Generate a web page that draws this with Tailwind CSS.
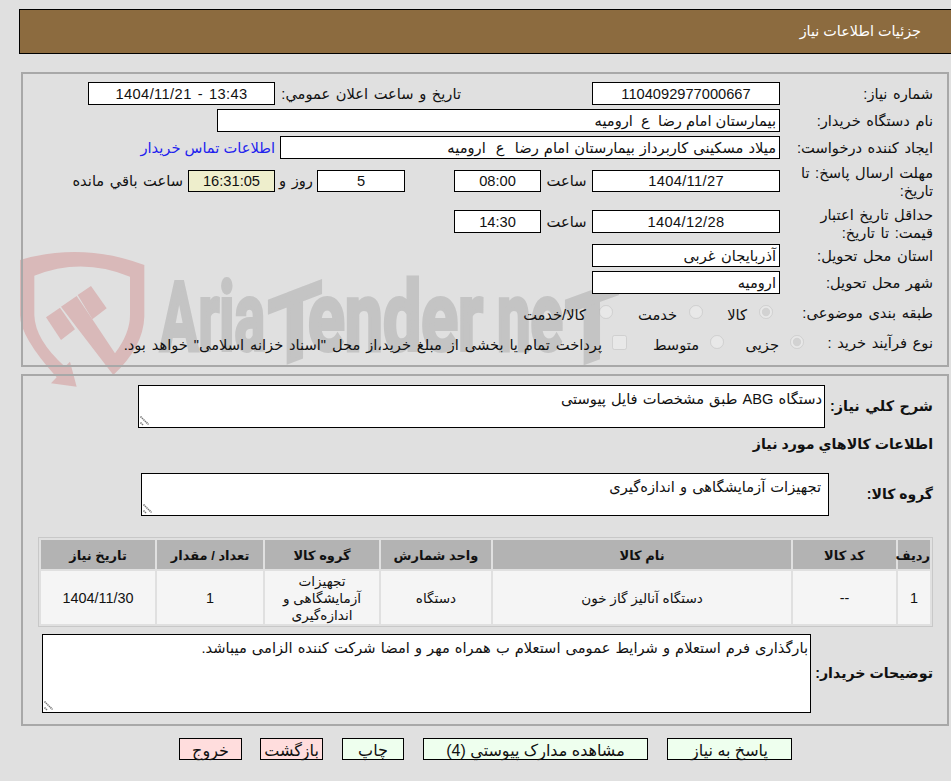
<!DOCTYPE html>
<html dir="rtl" lang="fa">
<head>
<meta charset="utf-8">
<script src="https://cdn.jsdelivr.net/npm/@tailwindcss/browser@4"></script>
<title>جزئیات اطلاعات نیاز</title>
</head>
<body class="relative h-[781px] w-[951px] overflow-hidden bg-[#e0e0e0] font-['Liberation_Sans','DejaVu_Sans',sans-serif] text-[14.67px] text-[#111] [word-spacing:1.5px]">
<svg class="absolute left-0 top-0 h-[781px] w-[951px]" viewBox="0 0 951 781" aria-hidden="true">
  <g transform="translate(15 240) scale(.33333)" fill="#d9b9b9">
    <path d="M15,60 Q200,5 388,75 L388,230 Q385,320 295,405 L185,262 L138,200 L185,168 L232,238 L300,340 Q345,280 345,225 L345,110 Q200,50 58,107 L58,225 Q60,300 150,380 L165,365 L185,440 L108,430 L125,412 Q15,290 15,225 Z"/>
    <path d="M93,232 L135,203 L180,268 L138,300 Z"/>
    <path d="M188,165 L228,138 L275,205 L232,238 Z"/>
  </g>
  <g fill="#c4c4c4" stroke="#c4c4c4" stroke-width="4" font-family="Roboto" font-weight="700" font-size="96">
    <text x="160" y="350" direction="ltr" textLength="105" lengthAdjust="spacingAndGlyphs">Aria</text>
    <text x="308" y="350" direction="ltr" textLength="175" lengthAdjust="spacingAndGlyphs">ender</text>
    <text x="497" y="350" direction="ltr" textLength="66" lengthAdjust="spacingAndGlyphs">ne</text>
    <text transform="translate(268 350) skewY(-21)" direction="ltr" textLength="54" lengthAdjust="spacingAndGlyphs" y="20">T</text>
    <text transform="translate(565 350) skewY(-20)" direction="ltr" textLength="54" lengthAdjust="spacingAndGlyphs" y="20">T</text>
  </g>
</svg>

<div class="relative">
  <div class="pt-[9px]">
    <div class="ml-[19px] mr-[-2px] flex h-[45px] items-center border border-black bg-[#8c6b3f] pr-[31px] pt-[1px] text-[14.4px] text-white [word-spacing:0]">جزئیات اطلاعات نیاز</div>
  </div>

  <section class="ml-[21px] mr-[2px] mt-[18px] h-[295px] border-2 border-[#a8a8a8] pr-[14px] pt-[8px]">
    <div class="flex h-[23px] items-center">
      <div class="w-[153px]">شماره نیاز:</div>
      <div class="flex h-[23px] w-[188px] items-center justify-center border border-black bg-white">1104092977000667</div>
      <div class="w-[317px] whitespace-nowrap pr-[131px]">تاریخ و ساعت اعلان عمومي:</div>
      <div class="flex h-[23px] w-[187px] items-center justify-center border border-black bg-white"><span dir="ltr" class="tracking-[0.4px]">1404/11/21 - 13:43</span></div>
    </div>
    <div class="mt-[4px] flex h-[23px] items-center">
      <div class="w-[153px]">نام دستگاه خریدار:</div>
      <div class="flex h-[23px] w-[563px] items-center border border-black bg-white pr-[3px] [word-spacing:0]">بیمارستان امام رضا &nbsp;ع &nbsp;ارومیه</div>
    </div>
    <div class="mt-[4px] flex h-[23px] items-center">
      <div class="w-[153px] whitespace-nowrap">ایجاد کننده درخواست:</div>
      <div class="flex h-[23px] w-[500px] items-center border border-black bg-white pr-[3px] [word-spacing:1px]">میلاد مسکینی کاربرداز بیمارستان امام رضا &nbsp;ع &nbsp;ارومیه</div>
      <a class="mr-[5px] whitespace-nowrap text-[#2222ee] [word-spacing:0]">اطلاعات تماس خریدار</a>
    </div>
    <div class="mt-[8px] flex h-[28px] items-start">
      <div class="-mt-[3px] w-[153px] pl-[12px] leading-[18px]">مهلت ارسال پاسخ: تا تاریخ:</div>
      <div class="mt-[3px] flex h-[22px] w-[188px] items-center justify-center border border-black bg-white tracking-[0.35px]">1404/11/27</div>
      <div class="mt-[3px] flex h-[22px] w-[51px] items-center justify-center">ساعت</div>
      <div class="mt-[3px] flex h-[22px] w-[87px] items-center justify-center border border-black bg-white">08:00</div>
      <div class="w-[49px]"></div>
      <div class="mt-[3px] flex h-[22px] w-[88px] items-center justify-center border border-black bg-white">5</div>
      <div class="mt-[3px] flex h-[22px] w-[42px] items-center justify-center whitespace-nowrap">روز و</div>
      <div class="mt-[3px] flex h-[22px] w-[87px] items-center justify-center border border-black bg-[#eeeecc]">16:31:05</div>
      <div class="mt-[3px] flex h-[22px] items-center whitespace-nowrap pr-[5px]">ساعت باقي مانده</div>
    </div>
    <div class="mt-[13px] flex h-[28px] items-start">
      <div class="-mt-[2px] w-[153px] pl-[12px] leading-[18px]">حداقل تاریخ اعتبار قیمت: تا تاریخ:</div>
      <div class="mt-[2px] flex h-[23px] w-[188px] items-center justify-center border border-black bg-white tracking-[0.35px]">1404/12/28</div>
      <div class="mt-[2px] flex h-[23px] w-[51px] items-center justify-center">ساعت</div>
      <div class="mt-[2px] flex h-[23px] w-[87px] items-center justify-center border border-black bg-white">14:30</div>
    </div>
    <div class="mt-[8px] flex h-[23px] items-center">
      <div class="w-[153px]">استان محل تحویل:</div>
      <div class="flex h-[23px] w-[188px] items-center border border-black bg-white pr-[3px]">آذربایجان غربی</div>
    </div>
    <div class="mt-[4px] flex h-[23px] items-center">
      <div class="w-[153px]">شهر محل تحویل:</div>
      <div class="flex h-[23px] w-[188px] items-center border border-black bg-white pr-[3px]">ارومیه</div>
    </div>
    <div class="mt-[6px] flex h-[24px] items-center">
      <div class="w-[153px] whitespace-nowrap pt-[2px]">طبقه بندی موضوعی:</div>
      <input type="radio" disabled checked class="mr-[7px] h-[14px] w-[14px] opacity-60">
      <span class="mr-[12px] w-[39px] pt-[6px]">کالا</span>
      <input type="radio" disabled class="mr-[5px] h-[14px] w-[14px] opacity-60">
      <span class="mr-[12px] w-[40px] pt-[6px]">خدمت</span>
      <input type="radio" disabled class="mr-[24px] h-[14px] w-[14px] opacity-60">
      <span class="mr-[13px] whitespace-nowrap pt-[6px]">کالا/خدمت</span>
    </div>
    <div class="mt-[6px] flex h-[24px] items-center">
      <div class="w-[153px] pt-[2px]">نوع فرآیند خرید :</div>
      <input type="radio" disabled checked class="mr-[-24px] h-[14px] w-[14px] opacity-60">
      <span class="mr-[11px] w-[35px] pt-[6px]">جزیی</span>
      <input type="radio" disabled class="mr-[20px] h-[14px] w-[14px] opacity-60">
      <span class="mr-[11px] w-[46px] pt-[6px]">متوسط</span>
      <input type="checkbox" disabled class="mr-[26px] h-[15px] w-[15px] opacity-60">
      <span class="mr-[10px] whitespace-nowrap pt-[6px] [word-spacing:1.8px]">پرداخت تمام یا بخشی از مبلغ خرید،از محل "اسناد خزانه اسلامی" خواهد بود.</span>
    </div>
  </section>

  <section class="ml-[21px] mr-[2px] mt-[7px] h-[352px] border-2 border-[#a8a8a8] pr-[14px] pt-[9px]">
    <div class="flex h-[43px] items-center">
      <div class="w-[108px] text-[14.4px] font-bold">شرح كلي نياز:</div>
      <div class="relative h-[43px] w-[687px]">
        <textarea readonly class="block h-full w-full resize-none rounded-none border border-black bg-white px-[2px] py-[2px] [word-spacing:1px]">دستگاه ABG طبق مشخصات فایل پیوستی</textarea>
        <svg class="absolute bottom-[2px] left-[2px] h-[10px] w-[10px]" viewBox="0 0 10 10"><path d="M.5.5 8.5 8.5M.5 6.5 3 9" stroke="#777" stroke-width="1.6" stroke-dasharray="1.4 .7" fill="none"/></svg>
      </div>
    </div>
    <div class="mt-[6px] h-[20px] text-[14.2px] font-bold [word-spacing:0]">اطلاعات كالاهاي مورد نياز</div>
    <div class="mt-[19px] flex h-[43px] items-center">
      <div class="w-[104px] text-[14px] font-bold [word-spacing:0]">گروه کالا:</div>
      <div class="relative h-[43px] w-[688px]">
        <textarea readonly class="block h-full w-full resize-none rounded-none border border-black bg-white px-[7px] py-[2px] [word-spacing:1px]">تجهیزات آزمایشگاهی و اندازه‌گیری</textarea>
        <svg class="absolute bottom-[2px] left-[2px] h-[10px] w-[10px]" viewBox="0 0 10 10"><path d="M.5.5 8.5 8.5M.5 6.5 3 9" stroke="#777" stroke-width="1.6" stroke-dasharray="1.4 .7" fill="none"/></svg>
      </div>
    </div>
    <table class="mt-[21px] w-[895px] table-fixed border-separate border-spacing-[2px] border border-[#c8c8c8] text-center text-[13.6px] [word-spacing:0]">
      <colgroup>
        <col class="w-[32px]"><col class="w-[103px]"><col class="w-[298px]"><col class="w-[110px]"><col class="w-[114px]"><col class="w-[106px]"><col class="w-[114px]">
      </colgroup>
      <thead>
        <tr class="h-[29px] bg-[#b3b3b3] text-[13px] font-bold">
          <th class="pt-[3px]">ردیف</th><th class="pt-[3px]">کد کالا</th><th class="pt-[3px]">نام کالا</th><th class="pt-[3px]">واحد شمارش</th><th class="pt-[3px]">گروه کالا</th><th class="pt-[3px]">تعداد / مقدار</th><th class="pt-[3px]">تاریخ نیاز</th>
        </tr>
      </thead>
      <tbody>
        <tr class="h-[53px] bg-[#f5f5f5]">
          <td class="pt-[3px] text-[14.4px]">1</td><td class="pt-[3px] text-[14.4px]">--</td><td class="pt-[3px]">دستگاه آنالیز گاز خون</td><td class="pt-[3px]">دستگاه</td><td class="px-[4px] pt-[2px] leading-[17px]">تجهیزات آزمایشگاهی و اندازه‌گیری</td><td class="pt-[3px] text-[14.4px]">1</td><td class="pt-[3px] text-[14.4px]">1404/11/30</td>
        </tr>
      </tbody>
    </table>
    <div class="mt-[7px] flex h-[79px] items-center">
      <div class="w-[122px] text-[14.2px] font-bold [word-spacing:0]">توضیحات خریدار:</div>
      <div class="relative h-[79px] w-[769px]">
        <textarea readonly class="block h-full w-full resize-none rounded-none border border-black bg-white px-[2px] py-[2px] [word-spacing:1px]">بارگذاری فرم استعلام و شرایط عمومی استعلام ب همراه مهر و امضا شرکت کننده الزامی میباشد.</textarea>
        <svg class="absolute bottom-[2px] left-[2px] h-[10px] w-[10px]" viewBox="0 0 10 10"><path d="M.5.5 8.5 8.5M.5 6.5 3 9" stroke="#777" stroke-width="1.6" stroke-dasharray="1.4 .7" fill="none"/></svg>
      </div>
    </div>
  </section>

  <div class="mt-[12px] flex h-[22px] pr-[159px] text-[16px] [word-spacing:0]">
    <button class="h-[22px] w-[125px] border border-black bg-[#eeffee] pb-[2px]">پاسخ به نیاز</button>
    <button class="mr-[19px] h-[22px] w-[225px] border border-black bg-[#eeffee] pb-[2px]">مشاهده مدارک پیوستي (4)</button>
    <button class="mr-[19px] h-[22px] w-[62px] border border-black bg-[#eeffee] pb-[2px]">چاپ</button>
    <button class="mr-[19px] h-[22px] w-[63px] border border-black bg-[#ffdddd] pb-[2px]">بازگشت</button>
    <button class="mr-[18px] h-[22px] w-[63px] border border-black bg-[#ffdddd] pb-[2px]">خروج</button>
  </div>
</div>
</body>
</html>
